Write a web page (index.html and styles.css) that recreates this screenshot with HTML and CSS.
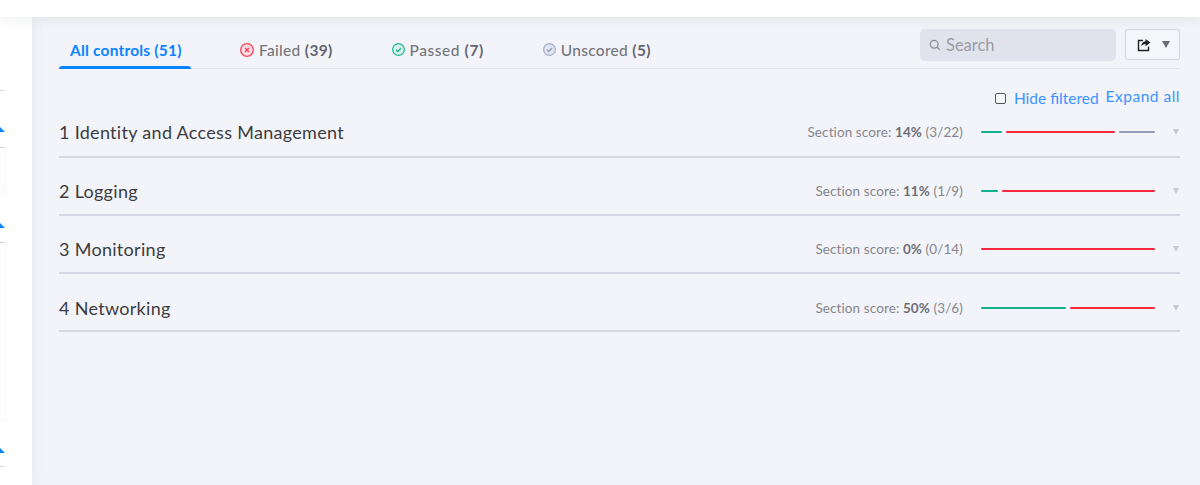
FILE: index.html
```html
<!DOCTYPE html>
<html lang="en">
<head>
    <meta charset="UTF-8">
    <title>Controls</title>
    <link rel="stylesheet" href="styles.css">
</head>
<body>
    <div class="topbar"></div>
    <div class="page">
        <div class="sidebar">
            <div class="side-group first">
                <div class="side-rule"></div>
                <div class="side-arrow"></div>
                <div class="side-rule"></div>
                <div class="side-card short"></div>
            </div>
            <div class="side-group second">
                <div class="side-arrow"></div>
                <div class="side-rule"></div>
                <div class="side-card tall"></div>
            </div>
            <div class="side-group third">
                <div class="side-arrow"></div>
                <div class="side-rule"></div>
            </div>
        </div>
        <div class="main">
            <div class="tabbar">
                <div class="tabs">
                    <div class="tab active"><span>All controls <b>(51)</b></span></div>
                    <div class="tab tab-failed">
                        <svg class="tab-icon" viewBox="0.7 0.7 14.6 14.6"><circle cx="8" cy="8" r="6.6" fill="#fbdde2" stroke="#f5455c" stroke-width="1.4"/><path d="M6 6l4 4M10 6l-4 4" stroke="#f5455c" stroke-width="1.5" fill="none"/></svg>
                        <span>Failed <b>(39)</b></span>
                    </div>
                    <div class="tab tab-passed">
                        <svg class="tab-icon" viewBox="0.7 0.7 14.6 14.6"><circle cx="8" cy="8" r="6.6" fill="#d8f2ea" stroke="#1fb58f" stroke-width="1.4"/><path d="M5.2 8.2l2 2 3.6-3.8" stroke="#1fb58f" stroke-width="1.5" fill="none"/></svg>
                        <span>Passed <b>(7)</b></span>
                    </div>
                    <div class="tab tab-unscored">
                        <svg class="tab-icon" viewBox="0.7 0.7 14.6 14.6"><circle cx="8" cy="8" r="6.6" fill="#e2e5f0" stroke="#a3aecb" stroke-width="1.4"/><path d="M5.2 8.2l2 2 3.6-3.8" stroke="#8f9bbd" stroke-width="1.5" fill="none"/></svg>
                        <span>Unscored <b>(5)</b></span>
                    </div>
                </div>
                <div class="tools">
                    <div class="search">
                        <svg class="search-icon" viewBox="0 0 12 12"><circle cx="5.2" cy="5.2" r="3.9" fill="none" stroke="#8b8f9c" stroke-width="1.2"/><path d="M8 8l2.8 2.8" stroke="#8b8f9c" stroke-width="1.2"/></svg>
                        <span>Search</span>
                    </div>
                    <div class="export">
                        <svg class="export-icon" viewBox="0 0 14 14"><path d="M6 2.5H1.5v10h10V8.5" fill="none" stroke="#222" stroke-width="1.4"/><path d="M8.5 1l5 3.6-5 3.6V6C6.5 6 5 7 4.2 8.8 4.2 5.6 6 3.4 8.5 3.2z" fill="#222"/></svg>
                        <span class="caret"></span>
                    </div>
                </div>
            </div>
            <div class="filters">
                <label class="hide-filtered"><span class="checkbox"></span>Hide filtered</label>
                <span class="expand-all">Expand all</span>
            </div>
            <div class="section first-section">
                <div class="section-title">1 Identity and Access Management</div>
                <div class="score">Section score: <b>14%</b> (3/22)</div>
                <div class="bars">
                    <span class="bar pass" style="flex-grow:3"></span>
                    <span class="bar fail" style="flex-grow:16"></span>
                    <span class="bar none" style="flex-grow:5.2"></span>
                </div>
                <span class="row-caret"></span>
            </div>
            <div class="section">
                <div class="section-title">2 Logging</div>
                <div class="score">Section score: <b>11%</b> (1/9)</div>
                <div class="bars">
                    <span class="bar pass" style="flex-grow:1.1"></span>
                    <span class="bar fail" style="flex-grow:10"></span>
                </div>
                <span class="row-caret"></span>
            </div>
            <div class="section">
                <div class="section-title">3 Monitoring</div>
                <div class="score">Section score: <b>0%</b> (0/14)</div>
                <div class="bars">
                    <span class="bar fail" style="flex-grow:1"></span>
                </div>
                <span class="row-caret"></span>
            </div>
            <div class="section">
                <div class="section-title">4 Networking</div>
                <div class="score">Section score: <b>50%</b> (3/6)</div>
                <div class="bars">
                    <span class="bar pass" style="flex-grow:1"></span>
                    <span class="bar fail" style="flex-grow:1"></span>
                </div>
                <span class="row-caret"></span>
            </div>
        </div>
    </div>
</body>
</html>
```

FILE: styles.css
```css
html, body {
    margin: 0;
    height: 485px;
    overflow: hidden;
}
body {
    font-family: "Lato", "Open Sans", sans-serif;
    background-color: #f3f4f9;
    color: #3c3c40;
    display: flex;
    flex-direction: column;
}
b {
    font-weight: 700;
}
.topbar {
    height: 17px;
    flex-shrink: 0;
    background: white;
    box-shadow: 0 2px 14px rgba(40,45,80,0.08);
    z-index: 2;
}
.page {
    flex: 1;
    display: flex;
}
.sidebar {
    width: 32px;
    flex-shrink: 0;
    background: white;
    box-shadow: 0 0 14px rgba(40,45,80,0.08);
}
.side-group.first {
    padding-top: 73px;
}
.side-rule {
    width: 5px;
    height: 1px;
    background: #d5d8e2;
}
.side-arrow {
    width: 0;
    height: 0;
    margin-left: -5px;
    margin-top: 36px;
    margin-bottom: 15px;
    border-left: 5px solid transparent;
    border-right: 5px solid transparent;
    border-bottom: 5px solid #0a84ff;
}
.second .side-arrow {
    margin-top: 29px;
    margin-bottom: 14px;
}
.third .side-arrow {
    margin-top: 28px;
    margin-bottom: 13px;
}
.side-card {
    width: 5px;
    background: #fdfdfe;
    box-shadow: 0 0 4px rgba(40,45,80,0.06);
}
.side-card.short {
    height: 46px;
}
.side-card.tall {
    height: 177px;
}
.main {
    flex: 1;
    padding: 0 20px 0 27px;
    min-width: 0;
}
.tabbar {
    display: flex;
    justify-content: space-between;
    height: 51px;
    border-bottom: 1px solid #dfe1e8;
}
.tabs {
    display: flex;
}
.tab {
    display: flex;
    align-items: center;
    gap: 5px;
    height: 36px;
    margin-top: 15px;
    padding-bottom: 1px;
    box-sizing: border-box;
    font-size: 15.5px;
    font-weight: 500;
    letter-spacing: 0.3px;
    color: #75767d;
    white-space: pre;
}
.tab b {
    color: #65666d;
}
.tab.active {
    width: 132px;
    padding-left: 11px;
    color: #0a84ff;
    font-weight: 700;
    letter-spacing: 0.2px;
    position: relative;
}
.tab.active b {
    color: #0a84ff;
}
.tab.active::after {
    content: "";
    position: absolute;
    left: 0;
    right: 0;
    bottom: -1px;
    height: 3px;
    background: #0a84ff;
    border-radius: 4px 4px 0 0;
}
.tab-failed {
    margin-left: 49px;
}
.tab-passed {
    margin-left: 59px;
    letter-spacing: 0.55px;
}
.tab-unscored {
    margin-left: 59px;
}
.tab-icon {
    width: 13px;
    height: 13px;
}
.tab-failed .tab-icon {
    width: 14px;
    height: 14px;
}
.tools {
    display: flex;
    gap: 9px;
    margin-top: 12px;
}
.search {
    width: 196px;
    height: 32px;
    padding-left: 9px;
    box-sizing: border-box;
    display: flex;
    align-items: center;
    gap: 5px;
    background: #e0e2ec;
    border-radius: 5px;
    color: #9a9ca6;
    font-size: 16.5px;
}
.search-icon {
    width: 12px;
    height: 12px;
}
.export {
    width: 55px;
    height: 31px;
    box-sizing: border-box;
    display: flex;
    align-items: center;
    padding-left: 11px;
    gap: 11px;
    background: #f5f6fa;
    border: 1px solid #d3d5dc;
    border-radius: 3px;
}
.export-icon {
    width: 14px;
    height: 14px;
}
.caret {
    border-left: 4px solid transparent;
    border-right: 4px solid transparent;
    border-top: 7px solid #6b6d76;
}
.filters {
    display: flex;
    justify-content: flex-end;
    align-items: center;
    height: 20px;
    margin-top: 18px;
    gap: 7px;
    font-size: 15.5px;
    color: #3b93ff;
}
.hide-filtered {
    display: flex;
    align-items: center;
    gap: 8px;
    margin-top: 2px;
}
.checkbox {
    width: 9px;
    height: 9px;
    border: 1px solid #55565c;
    border-radius: 2px;
    background: #f8f8fb;
}
.expand-all {
    margin-top: -3px;
    letter-spacing: 0.5px;
}
.section {
    display: flex;
    align-items: center;
    height: 58.2px;
    padding-top: 11px;
    box-sizing: border-box;
    border-bottom: 2px solid #d5d8e2;
}
.first-section {
    height: 50.7px;
    padding-top: 2px;
}
.section-title {
    flex: 1;
    font-size: 18px;
    letter-spacing: 0.3px;
    color: #3c3c40;
}
.score {
    font-size: 13.5px;
    letter-spacing: 0.1px;
    color: #85868d;
    white-space: pre;
}
.score b {
    color: #6d6e75;
}
.bars {
    display: flex;
    gap: 4px;
    width: 174px;
    margin-left: 18px;
}
.bar {
    height: 2px;
    border-radius: 1px;
    flex-basis: 0;
}
.pass {
    background: #14b28c;
}
.fail {
    background: #f6263f;
}
.none {
    background: #929db9;
}
.row-caret {
    margin-left: 18px;
    margin-right: 1px;
    border-left: 3px solid transparent;
    border-right: 3px solid transparent;
    border-top: 6px solid #c8cad5;
}
```
